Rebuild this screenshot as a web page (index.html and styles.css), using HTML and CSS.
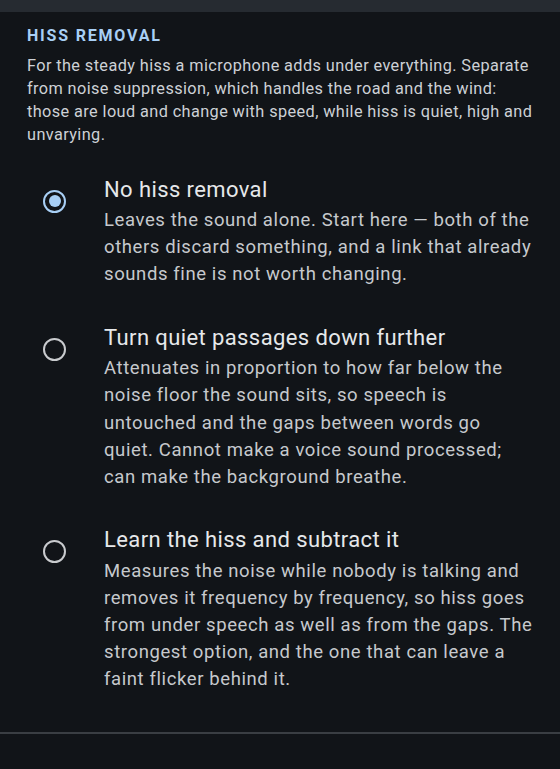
FILE: index.html
```html
<!DOCTYPE html>
<html>
<head>
<meta charset="utf-8">
<link rel="stylesheet" href="styles.css">
</head>
<body>
<div class="topbar"></div>
<section class="section">
  <h2 class="heading">HISS REMOVAL</h2>
  <p class="intro">For the steady hiss a microphone adds under everything. Separate from noise suppression, which handles the road and the wind: those are loud and change with speed, while hiss is quiet, high and unvarying.</p>
  <div class="options">
    <div class="option">
      <span class="radio checked"></span>
      <div class="text">
        <div class="opt-title">No hiss removal</div>
        <div class="opt-desc">Leaves the sound alone. Start here — both of the others discard something, and a link that already sounds fine is not worth changing.</div>
      </div>
    </div>
    <div class="option">
      <span class="radio"></span>
      <div class="text">
        <div class="opt-title">Turn quiet passages down further</div>
        <div class="opt-desc">Attenuates in proportion to how far below the noise floor the sound sits, so speech is untouched and the gaps between words go quiet. Cannot make a voice sound processed; can make the background breathe.</div>
      </div>
    </div>
    <div class="option">
      <span class="radio"></span>
      <div class="text">
        <div class="opt-title">Learn the hiss and subtract it</div>
        <div class="opt-desc">Measures the noise while nobody is talking and removes it frequency by frequency, so hiss goes from under speech as well as from the gaps. The strongest option, and the one that can leave a faint flicker behind it.</div>
      </div>
    </div>
  </div>
</section>
<div class="divider"></div>
</body>
</html>
```
FILE: styles.css
```css
html, body {
  margin: 0;
  padding: 0;
  background: #111418;
  font-family: Roboto, "Noto Sans", sans-serif;
  height: 100%;
}
.topbar {
  height: 12px;
  background: #262b31;
}
.section {
  padding: 14px 25px 20px 27px;
}
.heading {
  margin: 0;
  font-size: 16px;
  line-height: 20px;
  font-weight: 700;
  letter-spacing: 1.8px;
  color: #a8cff5;
}
.intro {
  margin: 7.5px 0 0;
  font-size: 16.3px;
  line-height: 23px;
  color: #cdd1d6;
  letter-spacing: 0.4px;
}
.options {
  margin-top: 13px;
}
.option {
  display: flex;
  padding: 17px 0 18px;
}
.radio {
  flex: none;
  box-sizing: border-box;
  width: 23px;
  height: 23px;
  border-radius: 50%;
  border: 2.5px solid #c9cbce;
  margin: 14px 38px 0 16px;
  display: flex;
  align-items: center;
  justify-content: center;
}
.radio.checked {
  border-color: #a8cff5;
}
.radio.checked::after {
  content: "";
  width: 12px;
  height: 12px;
  border-radius: 50%;
  background: #a8cff5;
}
.text {
  flex: 1;
}
.opt-title {
  font-size: 22px;
  line-height: 28px;
  color: #e6e8ea;
  letter-spacing: 0.4px;
}
.opt-desc {
  margin-top: 3.5px;
  font-size: 18.5px;
  line-height: 27.2px;
  color: #c6c9cd;
  letter-spacing: 0.6px;
}
.divider {
  height: 2px;
  background: #3a3e43;
}
```
